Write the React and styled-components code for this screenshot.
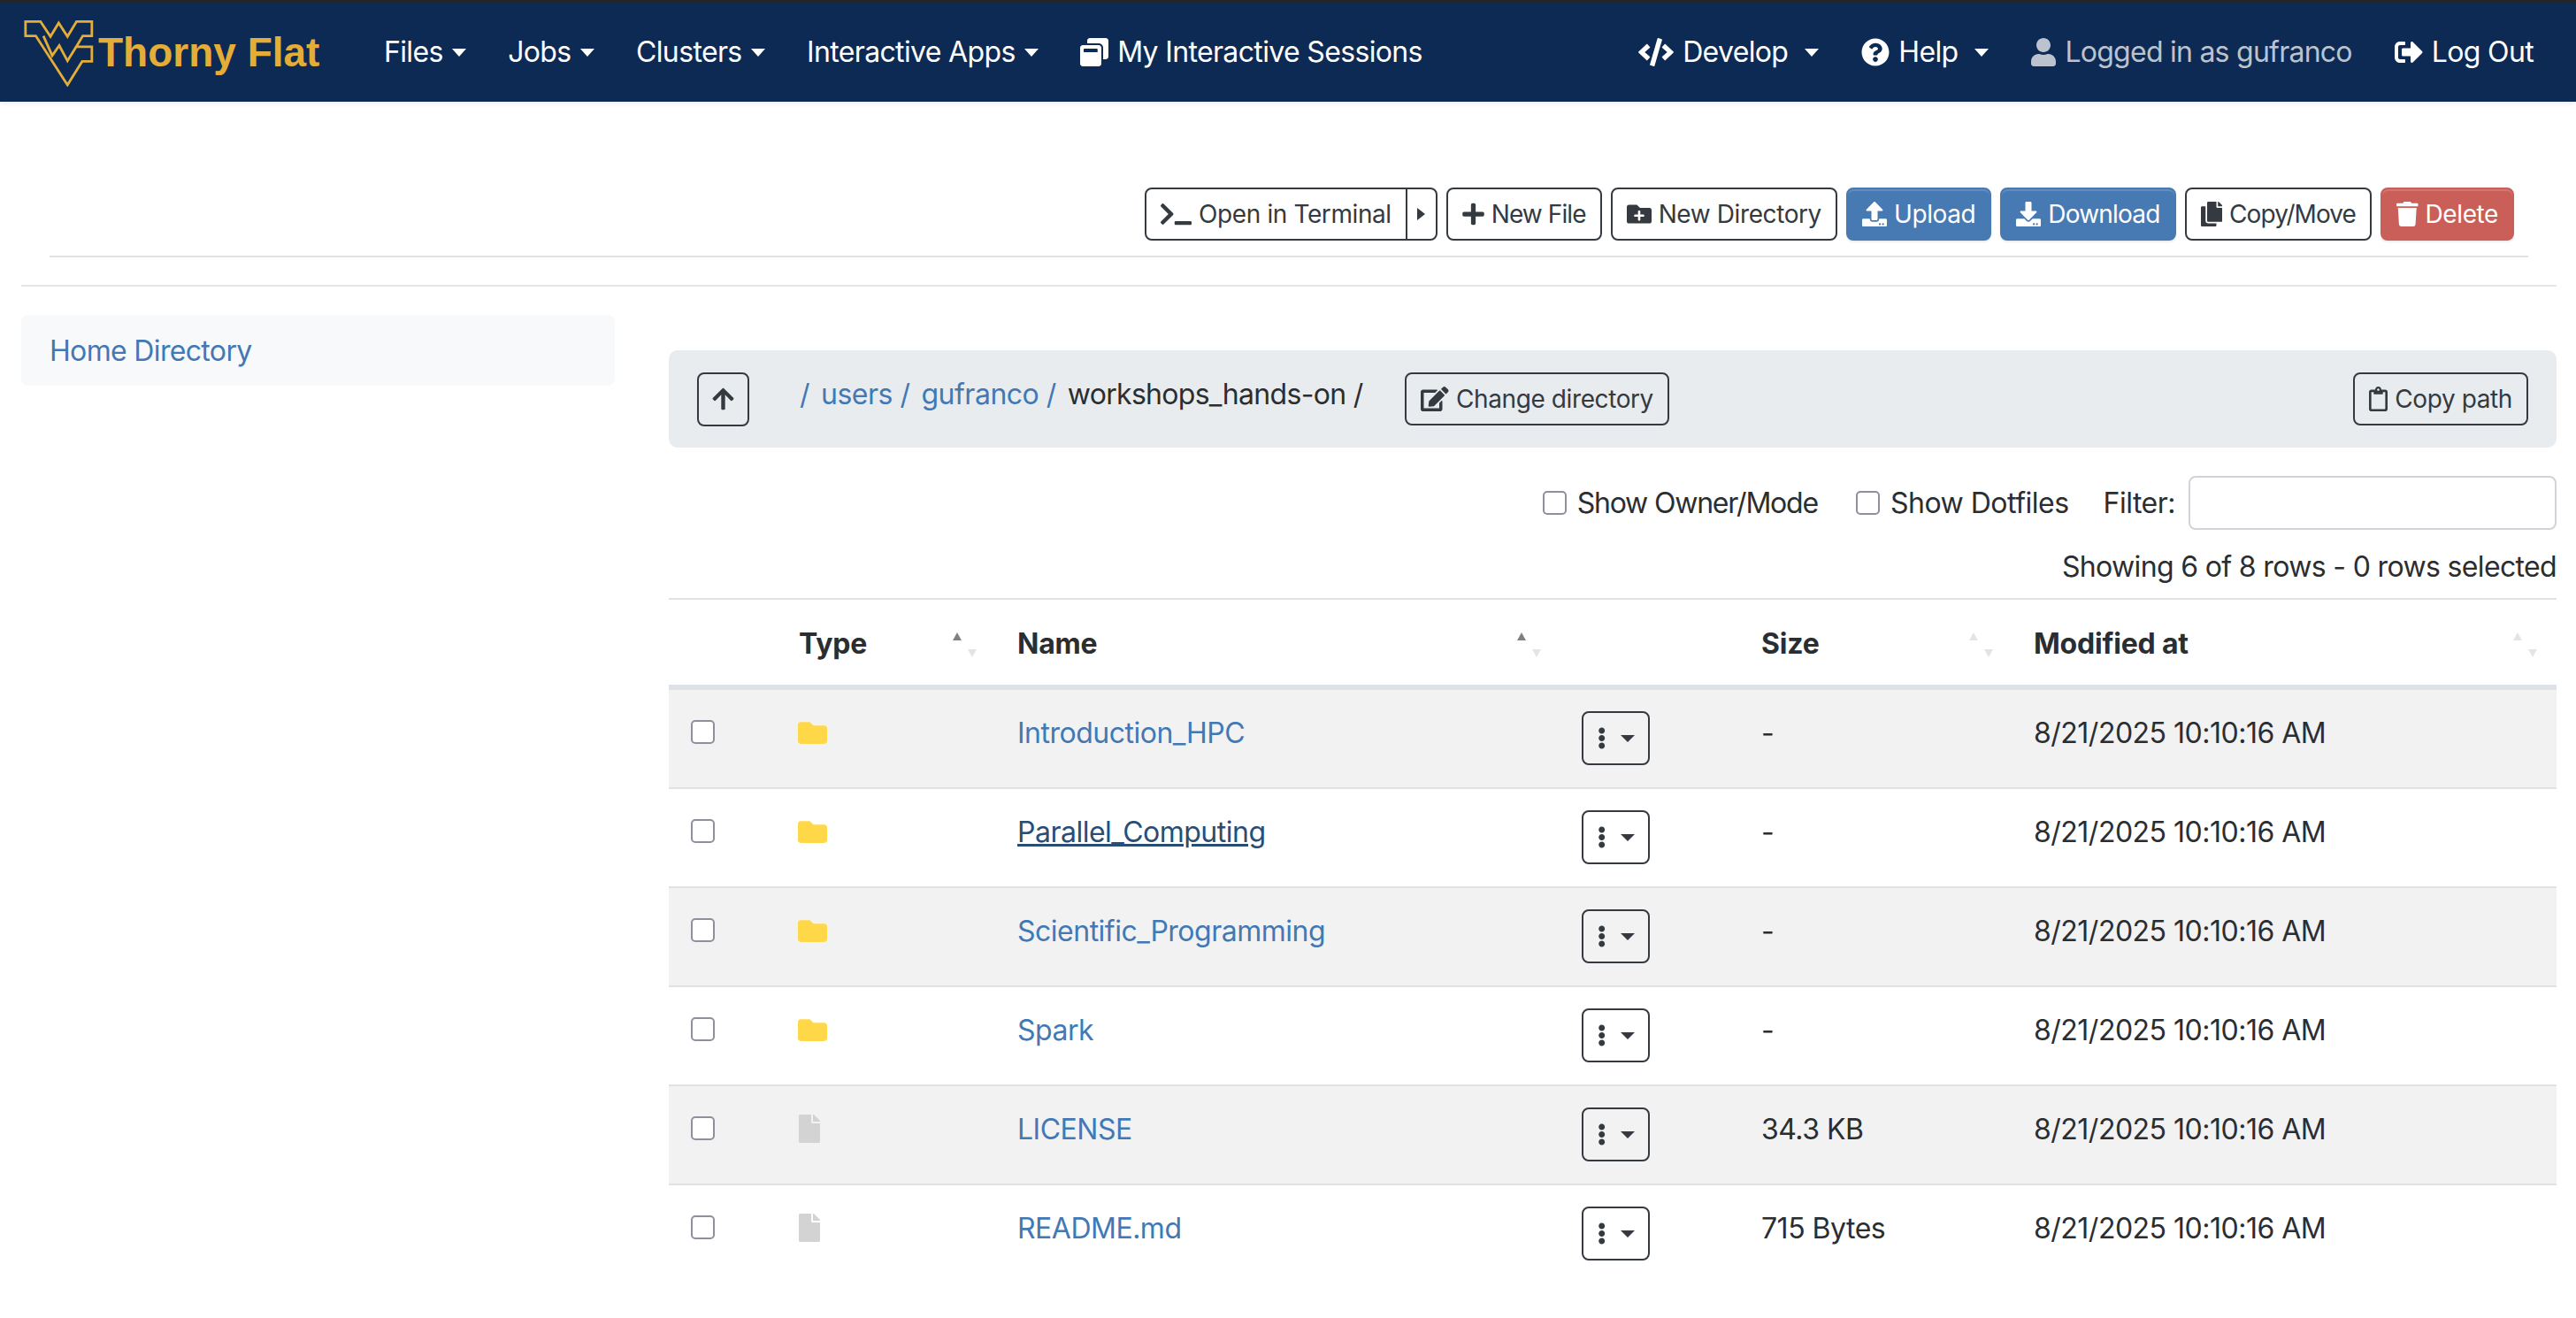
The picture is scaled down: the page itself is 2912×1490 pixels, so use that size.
// File browser page

import React from 'react';
import styled, { createGlobalStyle } from 'styled-components';
import {
  FaArrowUp,
  FaCode,
  FaCopy,
  FaDownload,
  FaEdit,
  FaEllipsisV,
  FaFile,
  FaFolder,
  FaFolderPlus,
  FaPlus,
  FaQuestionCircle,
  FaRegClipboard,
  FaSignOutAlt,
  FaTerminal,
  FaTrash,
  FaUpload,
  FaUser,
  FaWindowRestore,
} from 'react-icons/fa';

const GlobalStyle = createGlobalStyle`
  * {
    box-sizing: border-box;
  }

  html,
  body {
    margin: 0;
    height: 100%;
    background: #fff;
  }

  body {
    overflow: hidden;
    font-family: Inter, "Liberation Sans", sans-serif;
    font-size: 32px;
    line-height: 48px;
    letter-spacing: -0.5px;
    color: #2b2e31;
  }
`;

// react-icons boxes are square, the font awesome glyphs are not
const glyph = (Icon, w, h = 28) => styled(Icon)`
  flex: none;
  width: ${w}px;
  height: ${h}px;
`;

const TerminalIcon = glyph(FaTerminal, 35);
const PlusIcon = glyph(FaPlus, 25);
const FolderPlusIcon = glyph(FaFolderPlus, 28);
const UploadIcon = glyph(FaUpload, 28);
const DownloadIcon = glyph(FaDownload, 28);
const CopyIcon = glyph(FaCopy, 24.5);
const TrashIcon = glyph(FaTrash, 24.5);
const EditIcon = glyph(FaEdit, 31.5);
const ClipboardIcon = glyph(FaRegClipboard, 21);
const ArrowIcon = glyph(FaArrowUp, 25);
const DotsIcon = glyph(FaEllipsisV, 9.4, 25);
const WindowIcon = glyph(FaWindowRestore, 32, 32);
const CodeIcon = glyph(FaCode, 40, 32);
const QuestionIcon = glyph(FaQuestionCircle, 32, 32);
const UserIcon = glyph(FaUser, 28, 32);
const LogoutIcon = glyph(FaSignOutAlt, 32, 32);

const Navbar = styled.header`
  display: flex;
  align-items: center;
  height: 115px;
  padding: 0 48px 0 27px;
  border-top: 3px solid #23252b;
  background-color: #0d2a54;
  box-shadow: 0 2px 6px rgba(0, 0, 0, 0.08);
`;

const Brand = styled.div`
  display: flex;
  align-items: flex-end;
  gap: 5px;
  width: 407px;
  height: 75px;
  margin-top: 2px;
`;

const BrandText = styled.span`
  font-family: "Liberation Sans", sans-serif;
  font-size: 46px;
  font-weight: 700;
  line-height: 1;
  letter-spacing: 0;
  color: #e3ad37;
  margin-bottom: 16px;
`;

const NavGroup = styled.nav`
  display: flex;
  align-items: center;
  gap: ${(p) => p.$gap}px;
  margin-left: ${(p) => (p.$right ? 'auto' : 0)};
`;

const NavItem = styled.a`
  display: flex;
  align-items: center;
  gap: ${(p) => p.$gap || 10}px;
  margin-right: ${(p) => p.$after || 0}px;
  color: ${(p) => (p.$muted ? '#bcc3ce' : '#fff')};
  letter-spacing: ${(p) => (p.$muted ? -0.75 : -0.65)}px;
  white-space: nowrap;
`;

const NavCaret = styled.span`
  width: 0;
  height: 0;
  margin-left: ${(p) => p.$offset || 0}px;
  border-top: 9px solid #fff;
  border-left: 8px solid transparent;
  border-right: 8px solid transparent;
`;

const Toolbar = styled.div`
  display: flex;
  justify-content: flex-end;
  gap: 10px;
  margin: 97px 54px 0 56px;
  padding: 0 16px 17px 0;
  border-bottom: 2px solid #dee2e6;
`;

const Button = styled.button`
  display: inline-flex;
  align-items: center;
  gap: 8px;
  height: 60px;
  padding: 0 16px;
  border: 2px solid #343a40;
  border-radius: 8px;
  background: transparent;
  color: #343a40;
  font-family: inherit;
  font-size: 28px;
  line-height: 42px;
  letter-spacing: ${(p) => p.$ls || -0.4}px;
  white-space: nowrap;
`;

const SolidButton = styled(Button)`
  border-color: ${(p) => p.$color};
  background: ${(p) => p.$color};
  color: #fff;
  box-shadow: inset 0 2px 0 rgba(255, 255, 255, 0.15), 0 2px 2px rgba(0, 0, 0, 0.075);
`;

const SplitButton = styled.div`
  display: flex;
  height: 60px;
  border: 2px solid #343a40;
  border-radius: 8px;
  color: #343a40;
  font-size: 28px;
  line-height: 42px;
  letter-spacing: -0.4px;
`;

const SplitMain = styled.span`
  display: flex;
  align-items: center;
  gap: 8px;
  padding: 0 16px;
  border-right: 2px solid #343a40;
  white-space: nowrap;
`;

const SplitToggle = styled.span`
  display: flex;
  align-items: center;
  justify-content: center;
  width: 32px;
`;

const RightCaret = styled.span`
  width: 0;
  height: 0;
  border-left: 9px solid #343a40;
  border-top: 7px solid transparent;
  border-bottom: 7px solid transparent;
`;

const Divider = styled.hr`
  height: 2px;
  margin: 31px 22px 0 24px;
  border: 0;
  background: #e4e7ea;
`;

const Main = styled.main`
  display: grid;
  grid-template-columns: 671px 1fr;
  column-gap: 61px;
  padding: 0 22px 0 24px;
`;

const Sidebar = styled.aside`
  height: 80px;
  margin-top: 32px;
  padding: 17px 32px;
  border-radius: 8px;
  background: #f8f9fa;
  letter-spacing: -0.66px;
`;

const Link = styled.a`
  color: ${(p) => (p.$hover ? '#2a4d76' : '#4279b5')};
  text-decoration: ${(p) => (p.$hover ? 'underline' : 'none')};
`;

const Content = styled.section`
  margin-top: 72px;
`;

const PathBar = styled.div`
  display: flex;
  align-items: center;
  height: 110px;
  padding: 0 32px;
  border-radius: 10px;
  background: #e9ecef;
`;

const UpButton = styled(Button)`
  justify-content: center;
  width: 59px;
  height: 61px;
  padding: 0;
  margin-right: 57px;
`;

const Crumbs = styled.div`
  display: flex;
  gap: 13px;
  margin-top: -10px;
  margin-right: 48px;
  white-space: nowrap;
`;

const CurrentCrumb = styled.span`
  letter-spacing: -0.7px;
`;

const CopyPath = styled(Button)`
  margin-left: auto;
`;

const FilterRow = styled.div`
  display: flex;
  align-items: center;
  justify-content: flex-end;
  margin-top: 32px;
`;

const CheckLabel = styled.label`
  display: flex;
  align-items: center;
  gap: 12px;
  margin-right: ${(p) => p.$gap}px;
  letter-spacing: ${(p) => p.$ls || -0.5}px;
  white-space: nowrap;
`;

const CheckBox = styled.span`
  display: block;
  flex: none;
  width: 27px;
  height: 27px;
  border: 2px solid #8f8f9d;
  border-radius: 5px;
  background: #fff;
`;

const FilterInput = styled.input`
  width: 416px;
  height: 61px;
  margin-left: 15px;
  border: 2px solid #ced4da;
  border-radius: 8px;
  background: #fff;
`;

const Status = styled.div`
  margin-top: 18px;
  text-align: right;
  letter-spacing: -0.65px;
  white-space: nowrap;
`;

const Table = styled.div`
  margin-top: 11px;
  border-top: 2px solid #dee2e6;
`;

const TableHead = styled.div`
  display: grid;
  grid-template-columns: 131px 247px 638px 203px 308px 1fr;
  height: 102px;
  border-bottom: 6px solid #dee2e6;
`;

const HeadCell = styled.div`
  display: flex;
  align-items: flex-start;
  justify-content: space-between;
  padding: 26px ${(p) => p.$end || 30}px 0 16px;
  font-weight: 700;
  letter-spacing: -0.2px;
`;

const SortPair = styled.span`
  display: flex;
  gap: 7px;
  padding-top: 11px;
`;

const SortUp = styled.span`
  width: 0;
  height: 0;
  border-bottom: 9px solid ${(p) => (p.$dim ? '#e4e4e4' : '#808080')};
  border-left: 5px solid transparent;
  border-right: 5px solid transparent;
`;

const SortDown = styled.span`
  width: 0;
  height: 0;
  margin-top: 19px;
  border-top: 9px solid #e4e4e4;
  border-left: 5px solid transparent;
  border-right: 5px solid transparent;
`;

const Row = styled.div`
  display: grid;
  grid-template-columns: 131px 247px 638px 203px 308px 1fr;
  height: 112px;
  border-bottom: ${(p) => (p.$last ? '0' : '2px solid #dee2e6')};
  background: ${(p) => (p.$odd ? '#f2f2f2' : 'transparent')};
`;

const Cell = styled.div`
  padding: 25px 16px 0;
`;

const MenuCell = styled(Cell)`
  padding-top: 24px;
`;

const CheckCell = styled(Cell)`
  padding: 34px 0 0 25px;
`;

const IconCell = styled(Cell)`
  display: flex;
  font-size: ${(p) => (p.$file ? 32 : 33)}px;
  line-height: 1;
  padding-top: 32px;
  padding-left: ${(p) => (p.$file ? 12 : 15)}px;
  color: ${(p) => (p.$file ? '#d3d3d3' : '#ffd84a')};
`;

const MenuButton = styled(Button)`
  gap: 17px;
  width: 77px;
  height: 61px;
  padding: 0 0 0 16px;
`;

const MenuCaret = styled.span`
  width: 0;
  height: 0;
  border-top: 8px solid #343a40;
  border-left: 8px solid transparent;
  border-right: 8px solid transparent;
`;

// flying WV mark, traced from the reference
function Logo() {
  return (
    <svg width="79" height="75" viewBox="81 65 235 226" fill="none" stroke="#e3ad37" strokeWidth="8.5">
      <path d="M85 69H136L170 120L198 74L228 120L259 69H311V118H280L258 155H311V205H278L228 285L120 118H85Z" />
      <path d="M146 118L176 185L200 151L228 203L258 155" />
    </svg>
  );
}

const files = [
  { name: 'Introduction_HPC', size: '-' },
  { name: 'Parallel_Computing', size: '-', hover: true },
  { name: 'Scientific_Programming', size: '-' },
  { name: 'Spark', size: '-' },
  { name: 'LICENSE', size: '34.3 KB', file: true },
  { name: 'README.md', size: '715 Bytes', file: true },
];

function App() {
  return (
    <>
      <GlobalStyle />
      <Navbar>
        <Brand>
          <Logo />
          <BrandText>Thorny Flat</BrandText>
        </Brand>
        <NavGroup $gap={47.5}>
          <NavItem>Files<NavCaret /></NavItem>
          <NavItem>Jobs<NavCaret /></NavItem>
          <NavItem>Clusters<NavCaret /></NavItem>
          <NavItem>Interactive Apps<NavCaret /></NavItem>
          <NavItem><WindowIcon />My Interactive Sessions</NavItem>
        </NavGroup>
        <NavGroup $right $gap={48}>
          <NavItem><CodeIcon />Develop<NavCaret $offset={9} /></NavItem>
          <NavItem><QuestionIcon />Help<NavCaret $offset={9} /></NavItem>
          <NavItem $muted><UserIcon />Logged in as gufranco</NavItem>
          <NavItem><LogoutIcon />Log Out</NavItem>
        </NavGroup>
      </Navbar>

      <Toolbar>
        <SplitButton>
          <SplitMain><TerminalIcon />Open in Terminal</SplitMain>
          <SplitToggle><RightCaret /></SplitToggle>
        </SplitButton>
        <Button $ls={-0.9}><PlusIcon />New File</Button>
        <Button><FolderPlusIcon />New Directory</Button>
        <SolidButton $color="#4779b3"><UploadIcon />Upload</SolidButton>
        <SolidButton $color="#4779b3" $ls={-0.8}><DownloadIcon />Download</SolidButton>
        <Button $ls={-0.9}><CopyIcon />Copy/Move</Button>
        <SolidButton $color="#c95f58"><TrashIcon />Delete</SolidButton>
      </Toolbar>
      <Divider />

      <Main>
        <Sidebar>
          <Link>Home Directory</Link>
        </Sidebar>
        <Content>
          <PathBar>
            <UpButton><ArrowIcon /></UpButton>
            <Crumbs>
              <Link>/</Link>
              <Link>users /</Link>
              <Link>gufranco /</Link>
              <CurrentCrumb>workshops_hands-on /</CurrentCrumb>
            </Crumbs>
            <Button><EditIcon />Change directory</Button>
            <CopyPath><ClipboardIcon />Copy path</CopyPath>
          </PathBar>

          <FilterRow>
            <CheckLabel $gap={43} $ls={-1.2}><CheckBox />Show Owner/Mode</CheckLabel>
            <CheckLabel $gap={39}><CheckBox />Show Dotfiles</CheckLabel>
            <span>Filter:</span>
            <FilterInput />
          </FilterRow>
          <Status>Showing 6 of 8 rows - 0 rows selected</Status>

          <Table>
            <TableHead>
              <div />
              <HeadCell>Type<SortPair><SortUp /><SortDown /></SortPair></HeadCell>
              <HeadCell>Name<SortPair><SortUp /><SortDown /></SortPair></HeadCell>
              <div />
              <HeadCell>Size<SortPair><SortUp $dim /><SortDown /></SortPair></HeadCell>
              <HeadCell $end={22}>Modified at<SortPair><SortUp $dim /><SortDown /></SortPair></HeadCell>
            </TableHead>
            {files.map((f, i) => (
              <Row key={f.name} $odd={i % 2 === 0} $last={i === files.length - 1}>
                <CheckCell><CheckBox /></CheckCell>
                <IconCell $file={f.file}>{f.file ? <FaFile /> : <FaFolder />}</IconCell>
                <Cell><Link $hover={f.hover}>{f.name}</Link></Cell>
                <MenuCell>
                  <MenuButton><DotsIcon /><MenuCaret /></MenuButton>
                </MenuCell>
                <Cell>{f.size}</Cell>
                <Cell>8/21/2025 10:10:16 AM</Cell>
              </Row>
            ))}
          </Table>
        </Content>
      </Main>
    </>
  );
}

export default App;
